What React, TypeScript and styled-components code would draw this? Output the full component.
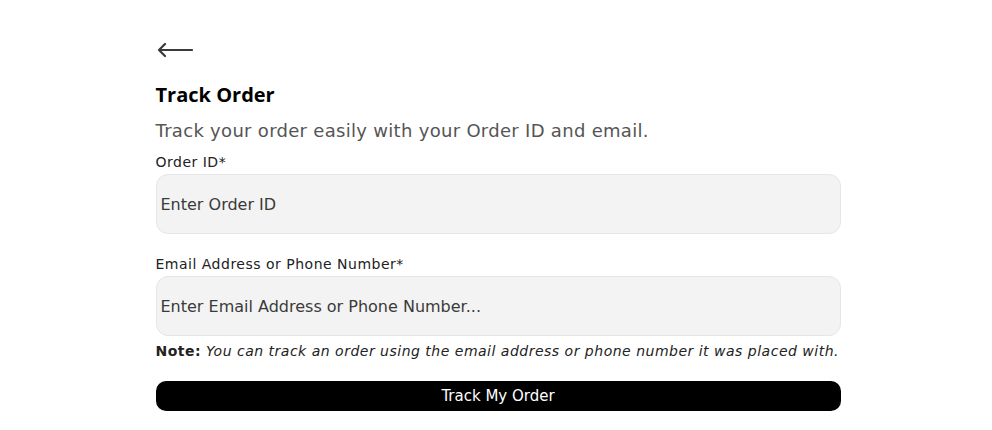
import React from 'react';
import styled, { createGlobalStyle } from 'styled-components';

const GlobalStyle = createGlobalStyle`
  body {
    margin: 0;
    background: #fff;
    font-family: 'DejaVu Sans', 'Open Sans', sans-serif;
  }
`;

export default function App() {
  return (
    <>
      <GlobalStyle />
      <Page>
        <Form onSubmit={(e) => e.preventDefault()}>
          <BackButton type="button" aria-label="Back">
            <svg width="36" height="16" viewBox="0 0 36 16" fill="none">
              <path d="M35 8H2M8 2L2 8l6 6" stroke="#3a3a3a" strokeWidth="2.2" strokeLinecap="round" strokeLinejoin="round" />
            </svg>
          </BackButton>
          <Title>Track Order</Title>
          <Subtitle>Track your order easily with your Order ID and email.</Subtitle>
          <Field $gap={8}>
            <Label>Order ID*</Label>
            <Input placeholder="Enter Order ID" />
          </Field>
          <Field $gap={20}>
            <Label>Email Address or Phone Number*</Label>
            <Input placeholder="Enter Email Address or Phone Number..." />
          </Field>
          <Note>
            <b>Note:</b> <i>You can track an order using the email address or phone number it was placed with.</i>
          </Note>
          <Submit type="submit">Track My Order</Submit>
        </Form>
      </Page>
    </>
  );
}

const Page = styled.div`
  display: flex;
  justify-content: center;
  padding: 38px 0 0 4px;
`;
const Form = styled.form`
  width: 685px;
  display: flex;
  flex-direction: column;
`;
const BackButton = styled.button`
  align-self: flex-start;
  background: none;
  border: 0;
  padding: 0;
  margin: 2px 0 0 1px;
  height: 20px;
  display: flex;
  align-items: center;
  cursor: pointer;
`;
const Title = styled.h1`
  margin: 22px 0 0;
  font-family: 'Open Sans', sans-serif;
  font-size: 20px;
  line-height: 26px;
  font-weight: 700;
  color: #000;
`;
const Subtitle = styled.p`
  margin: 10px 0 0;
  font-size: 18px;
  line-height: 26px;
  letter-spacing: 0.3px;
  color: #555;
`;
const Field = styled.div<{ $gap?: number }>`
  display: flex;
  flex-direction: column;
  margin-top: ${(p) => p.$gap ?? 0}px;
`;
const Label = styled.label`
  font-size: 14px;
  line-height: 20px;
  letter-spacing: 0.5px;
  color: #222;
  margin-bottom: 2px;
`;
const Input = styled.input`
  height: 60px;
  box-sizing: border-box;
  border: 1px solid #e6e6e6;
  border-radius: 12px;
  background: #f3f3f3;
  padding: 0 4px;
  font: inherit;
  font-size: 16px;
  color: #333;
  &::placeholder {
    color: #3a3a3a;
  }
`;
const Note = styled.p`
  margin: 5px 0 0;
  font-size: 14px;
  line-height: 20px;
  letter-spacing: 0.5px;
  color: #222;
  b {
    font-weight: 700;
  }
`;
const Submit = styled.button`
  margin-top: 20px;
  height: 30px;
  border: 0;
  border-radius: 10px;
  background: #000;
  color: #fff;
  font: inherit;
  font-size: 15px;
  cursor: pointer;
`;
